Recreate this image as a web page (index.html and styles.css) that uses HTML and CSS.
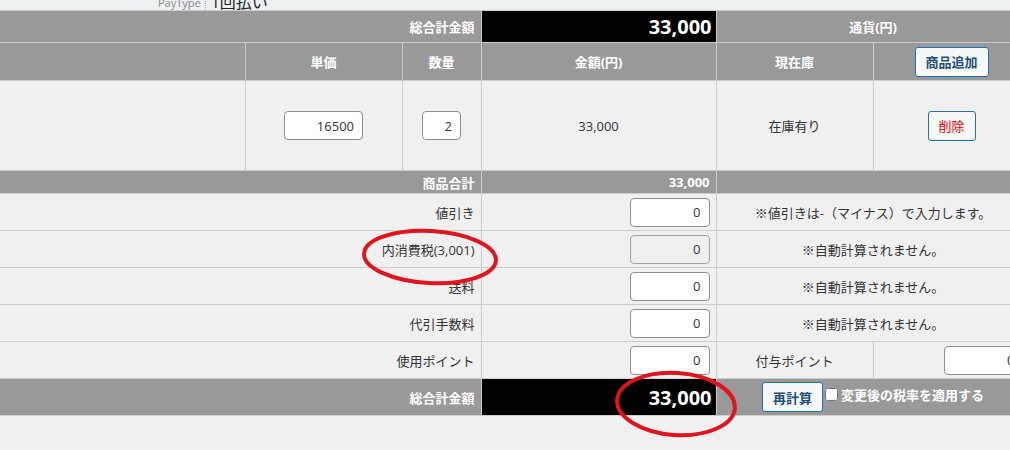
FILE: index.html
```html
<!DOCTYPE html>
<html lang="ja">
<head>
    <meta charset="UTF-8">
    <meta name="viewport" content="width=device-width, initial-scale=1.0">
    <title>注文編集</title>
    <link rel="stylesheet" href="styles.css">
</head>
<body>
    <div class="paybar">
        <div class="paybar-inner">
            <span class="pay-label">PayType</span>
            <span class="pay-value">1回払い</span>
        </div>
    </div>

    <table class="order">
        <colgroup>
            <col class="c-name">
            <col class="c-price">
            <col class="c-qty">
            <col class="c-amount">
            <col class="c-stock">
            <col class="c-action">
        </colgroup>
        <tr class="row-top">
            <th colspan="3" class="r first">総合計金額</th>
            <td class="grand">33,000</td>
            <th colspan="2">通貨(円)</th>
        </tr>
        <tr class="row-head">
            <th class="first"></th>
            <th>単価</th>
            <th>数量</th>
            <th>金額(円)</th>
            <th>現在庫</th>
            <th><button type="button" class="btn btn-strong">商品追加</button></th>
        </tr>
        <tr class="row-item">
            <td class="first"></td>
            <td class="c"><input type="text" class="num w-price" value="16500"></td>
            <td class="c"><input type="text" class="num w-qty" value="2"></td>
            <td class="c">33,000</td>
            <td class="c">在庫有り</td>
            <td class="c"><button type="button" class="btn btn-del">削除</button></td>
        </tr>
        <tr class="row-sub">
            <th colspan="3" class="r first">商品合計</th>
            <th class="r">33,000</th>
            <th colspan="2"></th>
        </tr>
        <tr class="row-field">
            <td colspan="3" class="r first">値引き</td>
            <td class="r"><input type="text" class="num w-field" value="0"></td>
            <td colspan="2" class="c">※値引きは-（マイナス）で入力します。</td>
        </tr>
        <tr class="row-field">
            <td colspan="3" class="r first">内消費税(3,001)</td>
            <td class="r"><input type="text" class="num w-field" value="0" disabled></td>
            <td colspan="2" class="c">※自動計算されません。</td>
        </tr>
        <tr class="row-field">
            <td colspan="3" class="r first">送料</td>
            <td class="r"><input type="text" class="num w-field" value="0"></td>
            <td colspan="2" class="c">※自動計算されません。</td>
        </tr>
        <tr class="row-field">
            <td colspan="3" class="r first">代引手数料</td>
            <td class="r"><input type="text" class="num w-field" value="0"></td>
            <td colspan="2" class="c">※自動計算されません。</td>
        </tr>
        <tr class="row-field">
            <td colspan="3" class="r first">使用ポイント</td>
            <td class="r"><input type="text" class="num w-field" value="0"></td>
            <td class="c">付与ポイント</td>
            <td class="r"><input type="text" class="num w-field" value="0"></td>
        </tr>
        <tr class="row-bottom">
            <th colspan="3" class="r first">総合計金額</th>
            <td class="grand">33,000</td>
            <th colspan="2">
                <div class="recalc">
                    <button type="button" class="btn btn-strong">再計算</button>
                    <label class="check"><input type="checkbox"><span>変更後の税率を適用する</span></label>
                </div>
            </th>
        </tr>
    </table>

    <!-- 赤丸の書き込み -->
    <svg class="marks" width="1010" height="450" viewBox="0 0 1010 450">
        <ellipse cx="430" cy="257" rx="66" ry="26" transform="rotate(3 430 257)"/>
        <ellipse cx="676" cy="404" rx="59" ry="31" transform="rotate(4 676 404)"/>
    </svg>
</body>
</html>
```

FILE: styles.css
```css
body {
    margin: 0;
    width: 1010px;
    height: 450px;
    overflow: hidden;
    position: relative;
    background-color: #f0f0f0;
    font-family: "Open Sans", "Noto Sans CJK JP", sans-serif;
    font-size: 13px;
    color: #333;
}
.paybar {
    height: 10px;
    overflow: hidden;
    background-color: #edf1f1;
}
.paybar-inner {
    display: flex;
    align-items: flex-end;
    height: 10px;
    padding-left: 158px;
}
.pay-label {
    display: block;
    line-height: 14px;
    font-size: 11px;
    color: #888;
    padding-right: 4px;
    border-right: 1px dotted #aaa;
}
.pay-value {
    display: block;
    line-height: 16px;
    font-size: 16px;
    color: #222;
    padding-left: 5px;
}
.order {
    border-collapse: collapse;
    table-layout: fixed;
    width: 1030px;
}
.c-name { width: 245px; }
.c-price { width: 157px; }
.c-qty { width: 79px; }
.c-amount { width: 235px; }
.c-stock { width: 157px; }
.c-action { width: 157px; }
.order th,
.order td {
    border: 1px solid #ccc;
    padding: 0 6px;
    text-align: center;
    white-space: nowrap;
}
.order th {
    background-color: #999;
    color: #fff;
    font-weight: bold;
}
.order .first {
    border-left: none;
}
.order .r {
    text-align: right;
}
.order .c {
    text-align: center;
}
.row-top th,
.row-top td {
    height: 31px;
}
.row-head th {
    height: 37px;
}
.row-item td {
    height: 89px;
}
.row-sub th {
    height: 22px;
}
.row-field td {
    height: 36px;
}
.row-bottom th,
.row-bottom td {
    height: 36px;
}
.order .grand {
    background-color: #000;
    color: #fff;
    font-size: 20px;
    font-weight: bold;
    text-align: right;
    padding-right: 4px;
}
.num {
    box-sizing: border-box;
    height: 29px;
    padding: 0 8px;
    border: 1px solid #8c8f94;
    border-radius: 4px;
    background-color: #fff;
    color: #333;
    font-family: inherit;
    font-size: 13px;
    text-align: right;
    vertical-align: middle;
}
.num:disabled {
    background-color: #f0f0f0;
    border-color: #a0a3a6;
    color: #333;
}
.w-price { width: 79px; }
.w-qty { width: 39px; }
.w-field { width: 80px; }
.btn {
    box-sizing: border-box;
    height: 30px;
    padding: 0 10px;
    border: 1px solid #2271b1;
    border-radius: 3px;
    background-color: #f6f7f7;
    color: #1d5078;
    font-family: inherit;
    font-size: 13px;
    cursor: pointer;
    vertical-align: middle;
}
.btn-strong {
    font-weight: bold;
}
.btn-del {
    color: #e00;
}
.recalc {
    display: flex;
    align-items: center;
    justify-content: center;
    gap: 2px;
}
.check {
    display: flex;
    align-items: center;
    gap: 3px;
    margin-bottom: 6px;
}
.check input {
    margin: 0;
    width: 13px;
    height: 13px;
}
.marks {
    position: absolute;
    top: 0;
    left: 0;
    pointer-events: none;
}
.marks ellipse {
    fill: none;
    stroke: #e0141e;
    stroke-width: 4;
}
```
